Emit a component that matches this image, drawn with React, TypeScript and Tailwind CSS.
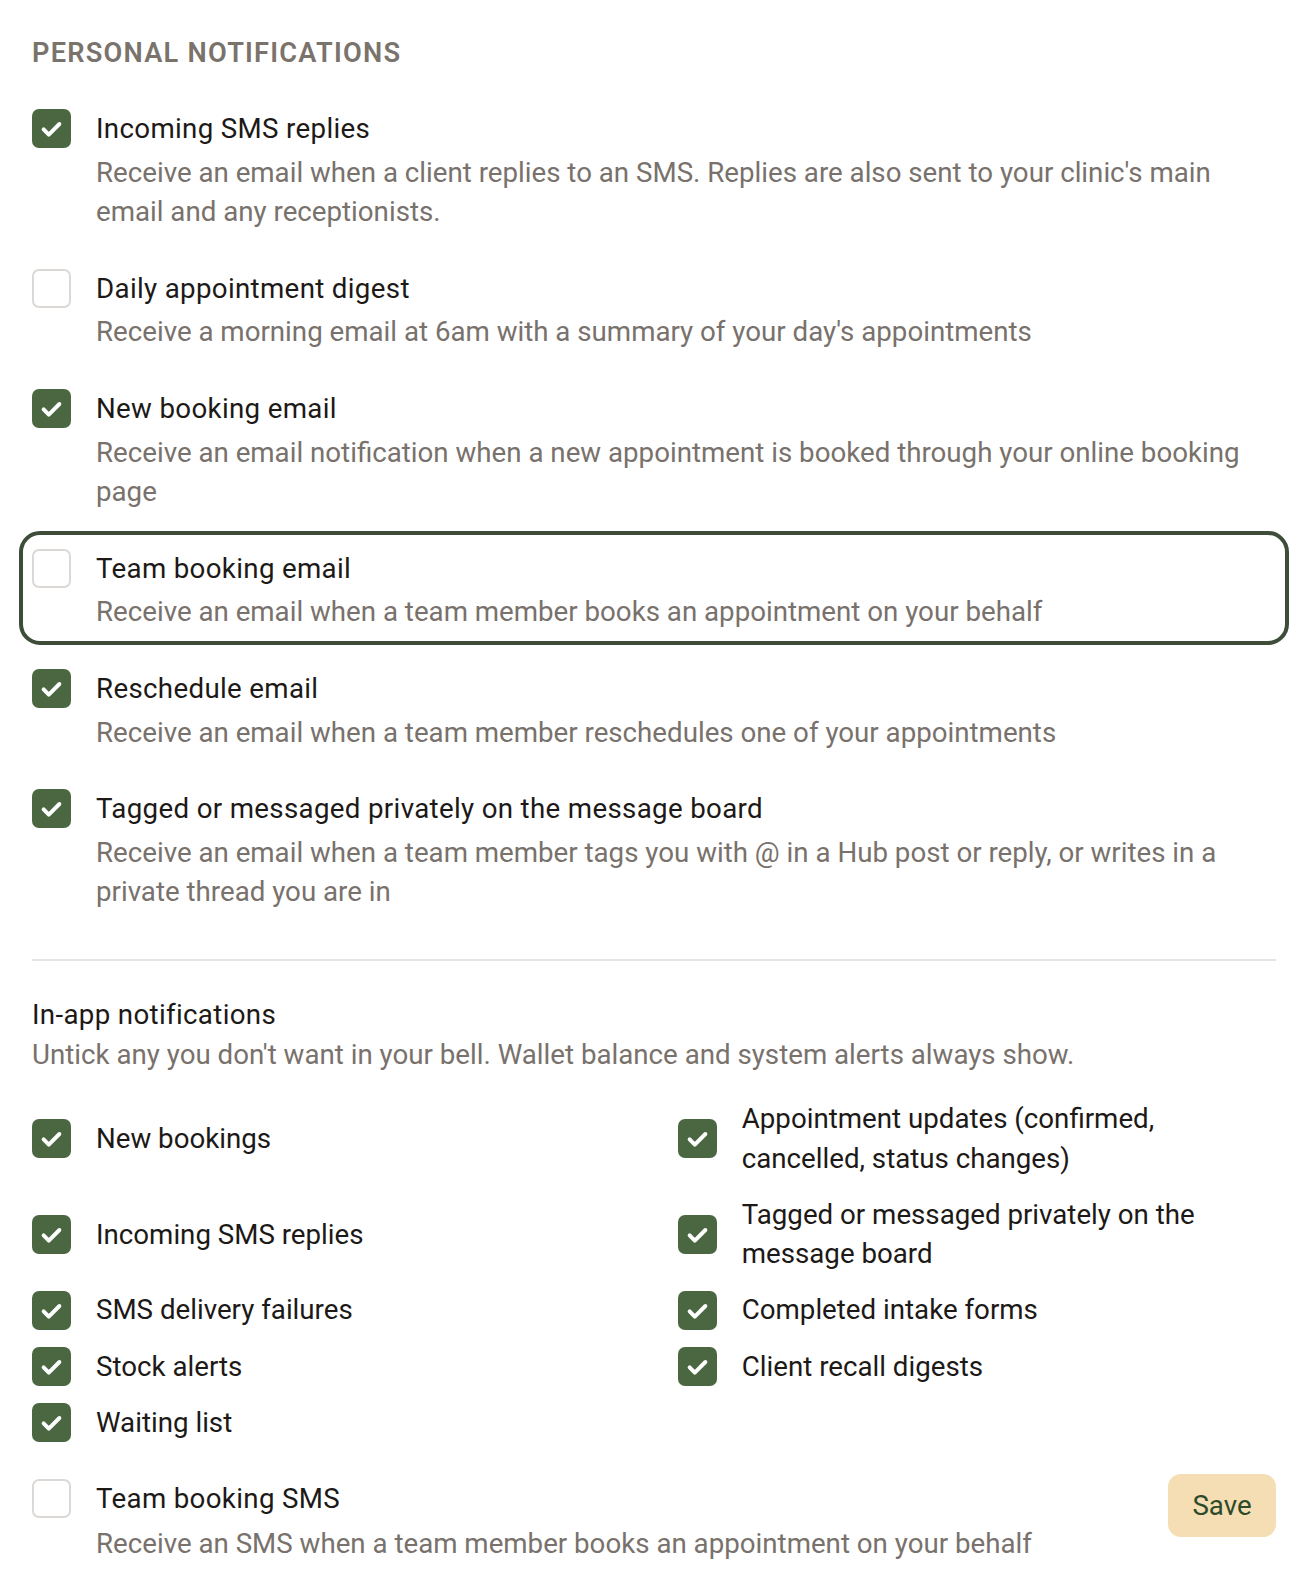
import { useState } from 'react';

type Pref = { id: string; title: string; description: string };

const personal: Pref[] = [
  {
    id: 'sms_replies',
    title: 'Incoming SMS replies',
    description:
      "Receive an email when a client replies to an SMS. Replies are also sent to your clinic's main email and any receptionists.",
  },
  {
    id: 'daily_digest',
    title: 'Daily appointment digest',
    description: "Receive a morning email at 6am with a summary of your day's appointments",
  },
  {
    id: 'new_booking',
    title: 'New booking email',
    description:
      'Receive an email notification when a new appointment is booked through your online booking page',
  },
  {
    id: 'team_booking',
    title: 'Team booking email',
    description: 'Receive an email when a team member books an appointment on your behalf',
  },
  {
    id: 'reschedule',
    title: 'Reschedule email',
    description: 'Receive an email when a team member reschedules one of your appointments',
  },
  {
    id: 'tagged',
    title: 'Tagged or messaged privately on the message board',
    description:
      'Receive an email when a team member tags you with @ in a Hub post or reply, or writes in a private thread you are in',
  },
];

// grid is filled row by row: left, right, left, right...
const inApp = [
  { id: 'new_bookings', label: 'New bookings' },
  { id: 'appt_updates', label: 'Appointment updates (confirmed, cancelled, status changes)' },
  { id: 'sms_in', label: 'Incoming SMS replies' },
  { id: 'board', label: 'Tagged or messaged privately on the message board' },
  { id: 'sms_fail', label: 'SMS delivery failures' },
  { id: 'intake', label: 'Completed intake forms' },
  { id: 'stock', label: 'Stock alerts' },
  { id: 'recall', label: 'Client recall digests' },
  { id: 'waiting', label: 'Waiting list' },
];

function Checkbox({ checked, onClick }: { checked: boolean; onClick: () => void }) {
  return (
    <button
      type="button"
      onClick={onClick}
      className={
        checked
          ? 'flex h-[39px] w-[39px] shrink-0 items-center justify-center rounded-[7px] bg-[#4b6742]'
          : 'flex h-[39px] w-[39px] shrink-0 items-center justify-center rounded-[7px] border-2 border-[#dcd8d5] bg-white'
      }
    >
      {checked && (
        <svg viewBox="0 0 24 24" className="h-[27px] w-[27px]" fill="none">
          <path
            d="M5 12.8l4.6 4.6L19 8"
            stroke="white"
            strokeWidth="3.5"
            strokeLinecap="round"
            strokeLinejoin="round"
          />
        </svg>
      )}
    </button>
  );
}

export default function App() {
  const [emailPrefs, setEmailPrefs] = useState<Record<string, boolean>>({
    sms_replies: true,
    daily_digest: false,
    new_booking: true,
    team_booking: false,
    reschedule: true,
    tagged: true,
  });
  const [bellPrefs, setBellPrefs] = useState<Record<string, boolean>>(
    Object.fromEntries(inApp.map((i) => [i.id, true]))
  );
  const [teamSms, setTeamSms] = useState(false);

  return (
    <div className="min-h-screen w-full bg-white px-8 pt-[35px] pb-[31px] font-['Roboto',sans-serif]">
      <h2 className="text-[27.2px] leading-[36px] font-semibold tracking-[0.045em] text-[#7a736c] uppercase">
        Personal notifications
      </h2>

      <div className="mt-[33px] flex flex-col gap-[32px]">
        {personal.map((p) => (
          <div
            key={p.id}
            className={
              p.id === 'team_booking'
                ? 'flex gap-[25px] rounded-[8px] pt-[5px] outline-4 outline-offset-[9px] outline-[#3e4c3a]'
                : 'flex gap-[25px] rounded-[8px] pt-[5px]'
            }
          >
            <Checkbox
              checked={emailPrefs[p.id]}
              onClick={() => setEmailPrefs({ ...emailPrefs, [p.id]: !emailPrefs[p.id] })}
            />
            <div className="flex-1">
              <div className="text-[27.7px] leading-[39.6px] font-[450] tracking-[0.012em] text-[#1c1917]">
                {p.title}
              </div>
              <p className="mt-[4px] text-[27.7px] leading-[39.6px] text-[#78716c]">{p.description}</p>
            </div>
          </div>
        ))}
      </div>

      <div className="mt-[47px] h-[2px] bg-[#e7e5e4]" />

      <div className="mt-[34px]">
        <div className="text-[27.7px] leading-[39.6px] font-[450] tracking-[0.012em] text-[#1c1917]">
          In-app notifications
        </div>
        <p className="text-[27.7px] leading-[39.6px] text-[#78716c]">
          Untick any you don't want in your bell. Wallet balance and system alerts always show.
        </p>
      </div>

      <div className="mt-[25px] grid grid-cols-2 items-center gap-x-[47.5px] gap-y-[16.5px]">
        {inApp.map((i) => (
          <div key={i.id} className="flex items-center gap-[25px]">
            <Checkbox
              checked={bellPrefs[i.id]}
              onClick={() => setBellPrefs({ ...bellPrefs, [i.id]: !bellPrefs[i.id] })}
            />
            <span className="text-[27.7px] leading-[39.6px] text-[#1c1917]">{i.label}</span>
          </div>
        ))}
      </div>

      <div className="mt-[32px] flex items-start justify-between gap-6">
        <div className="flex gap-[25px] pt-[5px]">
          <Checkbox checked={teamSms} onClick={() => setTeamSms(!teamSms)} />
          <div>
            <div className="text-[27.7px] leading-[39.6px] font-[450] tracking-[0.012em] text-[#1c1917]">
              Team booking SMS
            </div>
            <p className="mt-[5px] text-[27.7px] leading-[39.6px] text-[#78716c]">
              Receive an SMS when a team member books an appointment on your behalf
            </p>
          </div>
        </div>
        <button
          type="button"
          className="h-[63px] w-[108px] shrink-0 rounded-[13px] bg-[#f5deb3] text-[27.7px] text-[#2d4a2a]"
        >
          Save
        </button>
      </div>
    </div>
  );
}
